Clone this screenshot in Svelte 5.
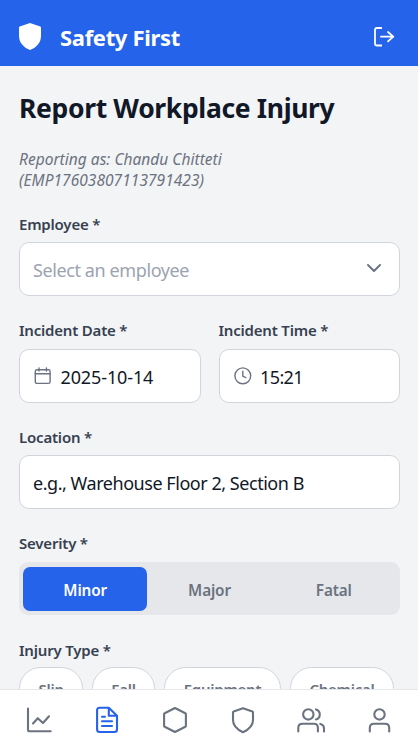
<script>
  const severities = ['Minor', 'Major', 'Fatal'];
  const injuryTypes = ['Slip', 'Fall', 'Equipment', 'Chemical'];
  const chipWidths = [64, 63, 117, 104];
  let severity = $state('Minor');
</script>

<div class="app">
  <header>
    <svg class="brand" viewBox="0 0 22 27"><path d="M11 0 21.3 3.6Q22 3.9 22 4.7V13C22 20.2 16.7 24.8 11 27 5.3 24.8 0 20.2 0 13V4.7Q0 3.9.7 3.6Z" fill="#fff" /></svg>
    <span class="name">Safety First</span>
    <svg class="logout" viewBox="0 0 21 20" fill="none" stroke="#fff" stroke-width="1.8" stroke-linecap="round" stroke-linejoin="round"><path d="M7.3 1H3Q1 1 1 3V16.5Q1 18.5 3 18.5H7.3M7 9.7H19.3M14 5l5.3 4.7L14 14.4" /></svg>
  </header>

  <main>
    <h1>Report Workplace Injury</h1>
    <p class="reporter"><span class="r1">Reporting as: Chandu Chitteti</span><br /><span class="r2">(EMP17603807113791423)</span></p>

    <section>
      <div class="label">Employee *</div>
      <div class="field">
        <span class="hint">Select an employee</span>
        <svg class="chev" viewBox="0 0 14 8" fill="none" stroke="#6b7280" stroke-width="1.9" stroke-linecap="round" stroke-linejoin="round"><path d="m1 1 6 6 6-6" /></svg>
      </div>
    </section>

    <div class="pair">
      <section>
        <div class="label">Incident Date *</div>
        <div class="field">
          <svg class="small" viewBox="0 0 18 18" fill="none" stroke="#6b7280" stroke-width="1.4" stroke-linecap="round"><rect x="1.3" y="2.7" width="14.8" height="13.7" rx="1.7" /><path d="M1.3 6.8h14.8M5 1v3M12.4 1v3" /></svg>
          <span class="date">2025-10-14</span>
        </div>
      </section>
      <section>
        <div class="label">Incident Time *</div>
        <div class="field">
          <svg class="small" viewBox="0 0 18 18" fill="none" stroke="#6b7280" stroke-width="1.4" stroke-linecap="round" stroke-linejoin="round"><circle cx="8.8" cy="8.8" r="7.9" /><path d="M8.8 4.2v5l3 1.4" /></svg>
          <span class="time">15:21</span>
        </div>
      </section>
    </div>

    <section>
      <div class="label">Location *</div>
      <div class="field"><span class="place">e.g., Warehouse Floor 2, Section B</span></div>
    </section>

    <section>
      <div class="label">Severity *</div>
      <div class="segments">
        {#each severities as s}
          <button class:active={severity === s} onclick={() => (severity = s)}>{s}</button>
        {/each}
      </div>
    </section>

    <section>
      <div class="label">Injury Type *</div>
      <div class="chips">
        {#each injuryTypes as t, i}
          <button style:width="{chipWidths[i]}px">{t}</button>
        {/each}
      </div>
    </section>
  </main>

  <nav>
    <svg viewBox="0 0 28 28"><path d="M3 2.5v21.3Q3 25.3 4.5 25.3H25.7M8 17.5l4.8-5.3 5.2 4.8 6-6.7" /></svg>
    <svg class="current" viewBox="0 0 28 28"><path d="M15.8 1.8H6.6Q4.1 1.8 4.1 4.3V23.5Q4.1 26 6.6 26H21.5Q24 26 24 23.5V9.7ZM15.8 1.8V9.7H24M9 10.7h3M9 15.3h10M9 20h10" /></svg>
    <svg viewBox="0 0 28 28"><path d="M14 2 24.3 7.3Q24.9 7.6 24.9 8.3V19.7Q24.9 20.4 24.3 20.7L14 26 3.7 20.7Q3.1 20.4 3.1 19.7V8.3Q3.1 7.6 3.7 7.3Z" /></svg>
    <svg viewBox="0 0 28 28"><path d="M14 2.2 23.4 5.4Q24 5.6 24 6.3V14C24 20 19.5 23.7 14 26.2 8.5 23.7 4 20 4 14V6.3Q4 5.6 4.6 5.4Z" /></svg>
    <svg viewBox="0 0 28 28"><circle cx="11.3" cy="8.4" r="5.2" /><path d="M1.3 25.5V21.8Q1.3 17.7 5.4 17.7H16.8Q20.9 17.7 20.9 21.8V25.5M19 3.4A5.2 5.2 0 0 1 19 13.4M23.3 17.9Q27 19 27 22.5V25.5" /></svg>
    <svg viewBox="0 0 28 28"><circle cx="14.5" cy="8.4" r="5.2" /><path d="M4.8 25.5V22Q4.8 17.8 9 17.8H20Q24.2 17.8 24.2 22V25.5" /></svg>
  </nav>
</div>

<style>
  .app {
    width: 418px;
    height: 739px;
    display: flex;
    flex-direction: column;
    overflow: hidden;
    background: #f3f4f6;
    color: #111827;
    font-family: "Noto Sans", "Open Sans", sans-serif;
    white-space: nowrap;
  }
  svg { display: block; flex: none; }
  header {
    box-sizing: border-box;
    flex: none;
    height: 66px;
    padding: 8px 23.5px 0 19px;
    display: flex;
    align-items: center;
    background: #2563eb;
    color: #fff;
  }
  .brand { width: 22px; height: 27px; margin: -1px 19px 0 0; }
  .name { flex: 1; font-size: 22px; font-weight: 700; line-height: 28px; letter-spacing: -0.33px; }
  .logout { width: 21px; height: 20px; }
  main { flex: 1; min-height: 0; overflow: hidden; padding: 23px 18px 0 19px; }
  h1 { margin: 0; font-size: 26.5px; line-height: 38px; font-weight: 700; letter-spacing: -0.34px; }
  .reporter { margin: 22px 0; font-size: 15.5px; line-height: 21px; font-style: italic; color: #6b7280; }
  .r1 { letter-spacing: 0.02px; }
  .r2 { letter-spacing: 0.05px; }
  section { height: 106.4px; }
  .label { height: 22px; line-height: 22px; margin-bottom: 7.4px; font-size: 15px; font-weight: 600; color: #374151; letter-spacing: -0.2px; }
  .field {
    box-sizing: border-box;
    height: 54px;
    border: 1px solid #d1d5db;
    border-radius: 10px;
    background: #fff;
    padding: 1px 14px 0 13px;
    display: flex;
    align-items: center;
    font-size: 18px;
  }
  .hint { flex: 1; color: #9ca3af; letter-spacing: -0.4px; }
  .chev { width: 14px; height: 8px; margin: -3px 4px 0 0; }
  .pair { display: grid; grid-template-columns: 1fr 1fr; gap: 18px; }
  .pair .field { padding-top: 2.5px; }
  .small { width: 18px; height: 18px; margin: -2px 8.5px 0 1px; }
  .date { letter-spacing: -0.12px; }
  .time { letter-spacing: -0.6px; }
  .place { letter-spacing: -0.46px; }
  button { font: inherit; margin: 0; border: 0; padding: 0; }
  .segments {
    box-sizing: border-box;
    height: 53px;
    padding: 4.5px 4px;
    margin-top: 0.5px;
    display: grid;
    grid-template-columns: repeat(3, 1fr);
    background: #e5e7eb;
    border-radius: 9px;
  }
  .label:has(+ .segments) { margin-bottom: 7.9px; }
  .segments button {
    font-size: 15.3px;
    font-weight: 600;
    padding-top: 3px;
    color: #6b7280;
    background: transparent;
    border-radius: 7px;
    letter-spacing: -0.15px;
  }
  .segments .active { background: #2563eb; color: #fff; }
  .chips { display: flex; gap: 9px; margin-top: -0.7px; }
  .chips button {
    box-sizing: border-box;
    flex: none;
    height: 43px;
    border: 1px solid #d1d5db;
    border-radius: 22px;
    background: #fff;
    font-size: 15px;
    font-weight: 600;
    color: #6b7280;
    letter-spacing: -0.25px;
  }
  nav {
    box-sizing: border-box;
    flex: none;
    height: 50px;
    padding: 16px 4.7px 0 5.3px;
    border-top: 1px solid #e5e7eb;
    background: #fff;
    display: grid;
    grid-template-columns: repeat(6, 1fr);
    justify-items: center;
  }
  nav svg { width: 28px; height: 28px; fill: none; stroke: #6b7280; stroke-width: 2.1; stroke-linecap: round; stroke-linejoin: round; }
  nav .current { stroke: #2563eb; }
</style>
